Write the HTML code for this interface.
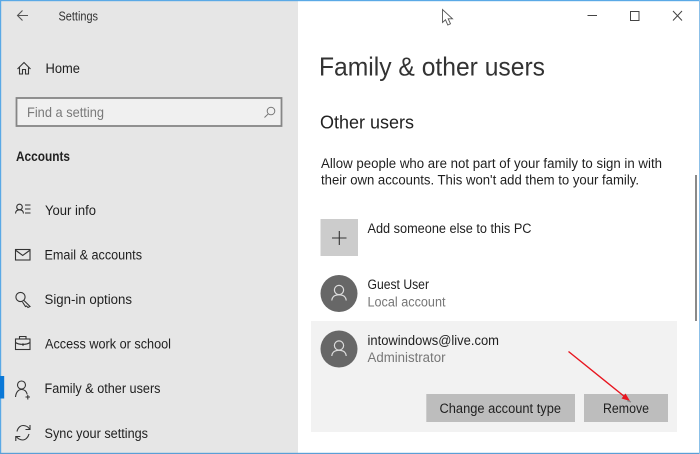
<!DOCTYPE html>
<html>
<head>
<meta charset="utf-8">
<style>
html,body{margin:0;padding:0;background:#fff;width:700px;height:454px;overflow:hidden}
svg{display:block;filter:blur(.35px)}
text{font-family:"Liberation Sans",sans-serif;fill:#1f1f1f;font-size:13.5px}
.g{fill:#777}
.i{fill:none;stroke:#333;stroke-width:1.1}
</style>
</head>
<body>
<svg width="700" height="454" viewBox="0 0 700 454" xmlns="http://www.w3.org/2000/svg">
<rect width="700" height="454" fill="#fff"/>
<rect x="1" y="1" width="297" height="452" fill="#e6e6e6"/>
<rect x="0" y="0" width="700" height="1.2" fill="#5aa9e6"/>
<rect x="0" y="0" width="1.2" height="454" fill="#5aa9e6"/>
<rect x="0" y="452.8" width="700" height="1.2" fill="#5a9fd6"/>
<rect x="699" y="0" width="1" height="454" fill="#8cc0e8"/>

<!-- back -->
<path class="i" style="stroke:#555" d="M28 15.5H17.5M22.5 10.5L17.5 15.5L22.5 20.5"/>
<text x="58.5" y="20.5" style="font-size:13px;fill:#333" textLength="39.5" lengthAdjust="spacingAndGlyphs">Settings</text>

<!-- home -->
<path class="i" d="M17.5 69L24 62.5L30.5 69M19.5 67.5V74H22.5V69.5H25.5V74H28.5V67.5"/>
<text x="45.5" y="73" style="font-size:14px" textLength="34.5" lengthAdjust="spacingAndGlyphs">Home</text>

<!-- search -->
<rect x="16.5" y="98" width="265" height="28" fill="#f0f0f0" stroke="#868686" stroke-width="1.8"/>
<text x="27" y="117" style="font-size:14px;fill:#7a7a7a" textLength="77" lengthAdjust="spacingAndGlyphs">Find a setting</text>
<circle cx="271" cy="111" r="3.8" fill="none" stroke="#777" stroke-width="1"/>
<path d="M268.3 113.8L264.5 117.5" stroke="#777" stroke-width="1" fill="none"/>

<text x="16" y="161" style="font-size:13.5px;font-weight:bold;fill:#222" textLength="54" lengthAdjust="spacingAndGlyphs">Accounts</text>

<!-- your info -->
<circle cx="19.5" cy="207" r="2.8" class="i"/>
<path class="i" d="M15.5 213.5C15.7 210.8 17.5 209.8 19.5 209.8C21.5 209.8 23.3 210.8 23.5 213.5M25 205H30.5M25 209H30.5M25 213H30.5"/>
<text x="45" y="215" textLength="51" lengthAdjust="spacingAndGlyphs">Your info</text>

<!-- email -->
<rect x="15.5" y="249.5" width="14.5" height="10.5" class="i"/>
<path class="i" d="M16 250.5L22.7 255.5L29.5 250.5"/>
<text x="44.5" y="259.5" textLength="97.5" lengthAdjust="spacingAndGlyphs">Email &amp; accounts</text>

<!-- key -->
<circle cx="20.5" cy="297" r="4.6" class="i"/>
<path class="i" d="M24 300.5L30 306.5L28 307.5L26.5 306L25.5 306.5L22.5 302"/>
<text x="44.5" y="304" textLength="87.5" lengthAdjust="spacingAndGlyphs">Sign-in options</text>

<!-- briefcase -->
<rect x="15.5" y="339" width="14.5" height="10.5" class="i"/>
<path class="i" d="M19.5 339V336.5H26V339M15.5 342.5C19 345 26.5 345 30 342.5"/>
<path d="M22 343.5h2v2h-2z" fill="#333"/>
<text x="45" y="348.7" textLength="126" lengthAdjust="spacingAndGlyphs">Access work or school</text>

<!-- family -->
<rect x="0" y="376" width="4.2" height="22.5" fill="#0a78d7"/>
<circle cx="21.5" cy="385" r="4" class="i"/>
<path class="i" d="M15.5 397C16 392 18.5 389.5 21.5 389.5C24.5 389.5 26.5 391.5 27.3 394.5M25.5 397H30M27.8 395V399.5"/>
<text x="44.5" y="393" textLength="116" lengthAdjust="spacingAndGlyphs">Family &amp; other users</text>

<!-- sync -->
<path class="i" d="M17 431.5C18 427 21 425.5 23 425.5C26 425.5 28 426.5 29.5 429M30 425V429.5H25.5M29 434C28 438 25 440 23 440C20 440 18 439 16.3 436.5M15.8 441V436.5H20.3"/>
<text x="44.5" y="438" textLength="103.5" lengthAdjust="spacingAndGlyphs">Sync your settings</text>

<!-- cursor -->
<path d="M442.5 9.5V22.5L445.5 19.8L447.8 25L450.5 23.8L448.2 18.8H452.5Z" fill="#fff" stroke="#555" stroke-width=".9"/>

<!-- window controls -->
<path d="M587.5 15.5H597" stroke="#444" fill="none"/>
<rect x="630.5" y="11.5" width="8.5" height="9" fill="none" stroke="#444"/>
<path d="M673 11L682 20.5M682 11L673 20.5" stroke="#444" fill="none"/>

<!-- headers -->
<text x="319" y="75.5" style="font-size:26px;fill:#333" textLength="226" lengthAdjust="spacingAndGlyphs">Family &amp; other users</text>
<text x="320" y="128.7" style="font-size:18.5px;fill:#222" textLength="94" lengthAdjust="spacingAndGlyphs">Other users</text>
<text x="321" y="168" textLength="341" lengthAdjust="spacingAndGlyphs">Allow people who are not part of your family to sign in with</text>
<text x="321" y="184.5" textLength="318" lengthAdjust="spacingAndGlyphs">their own accounts. This won't add them to your family.</text>

<!-- scrollbar -->
<rect x="695" y="175" width="2" height="146" fill="#8a8a8a"/>

<!-- add -->
<rect x="320.5" y="219" width="37.5" height="37" fill="#cccccc"/>
<path d="M339.3 231V245M332 238H346.5" stroke="#333" stroke-width="1.1" fill="none"/>
<text x="367.5" y="233" textLength="164" lengthAdjust="spacingAndGlyphs">Add someone else to this PC</text>

<!-- guest -->
<circle cx="339" cy="293.5" r="18.5" fill="#676767"/>
<circle cx="339" cy="290" r="4.6" fill="none" stroke="#ddd" stroke-width="1.2"/>
<path d="M331.8 300.5C332.2 296.5 335 294.8 339 294.8C343 294.8 345.8 296.5 346.2 300.5" fill="none" stroke="#ddd" stroke-width="1.2"/>
<text x="367.5" y="289" textLength="61.5" lengthAdjust="spacingAndGlyphs">Guest User</text>
<text x="367.5" y="306.5" class="g" textLength="78" lengthAdjust="spacingAndGlyphs">Local account</text>

<!-- selected panel -->
<rect x="311" y="321" width="366" height="111" fill="#f2f2f2"/>
<circle cx="339" cy="349" r="18.5" fill="#676767"/>
<circle cx="339" cy="345.5" r="4.6" fill="none" stroke="#ddd" stroke-width="1.2"/>
<path d="M331.8 356C332.2 352 335 350.3 339 350.3C343 350.3 345.8 352 346.2 356" fill="none" stroke="#ddd" stroke-width="1.2"/>
<text x="367.5" y="345" textLength="131.5" lengthAdjust="spacingAndGlyphs">intowindows@live.com</text>
<text x="367.5" y="362" class="g" textLength="78" lengthAdjust="spacingAndGlyphs">Administrator</text>

<!-- buttons -->
<rect x="426.3" y="394" width="148.7" height="28" fill="#bdbdbd"/>
<text x="439.5" y="413" textLength="121.5" lengthAdjust="spacingAndGlyphs">Change account type</text>
<rect x="584" y="394" width="84" height="28" fill="#bdbdbd"/>
<text x="603" y="413" textLength="46" lengthAdjust="spacingAndGlyphs">Remove</text>

<!-- arrow -->
<path d="M568.5 351.5L625 397" stroke="#e8151f" stroke-width="1.4" fill="none"/>
<path d="M630 401L621.5 398.5L625.5 393.5Z" fill="#e8151f"/>
<path d="M627 400.5L631 402" stroke="#888" stroke-width="1.4" fill="none"/>
</svg>
</body>
</html>
